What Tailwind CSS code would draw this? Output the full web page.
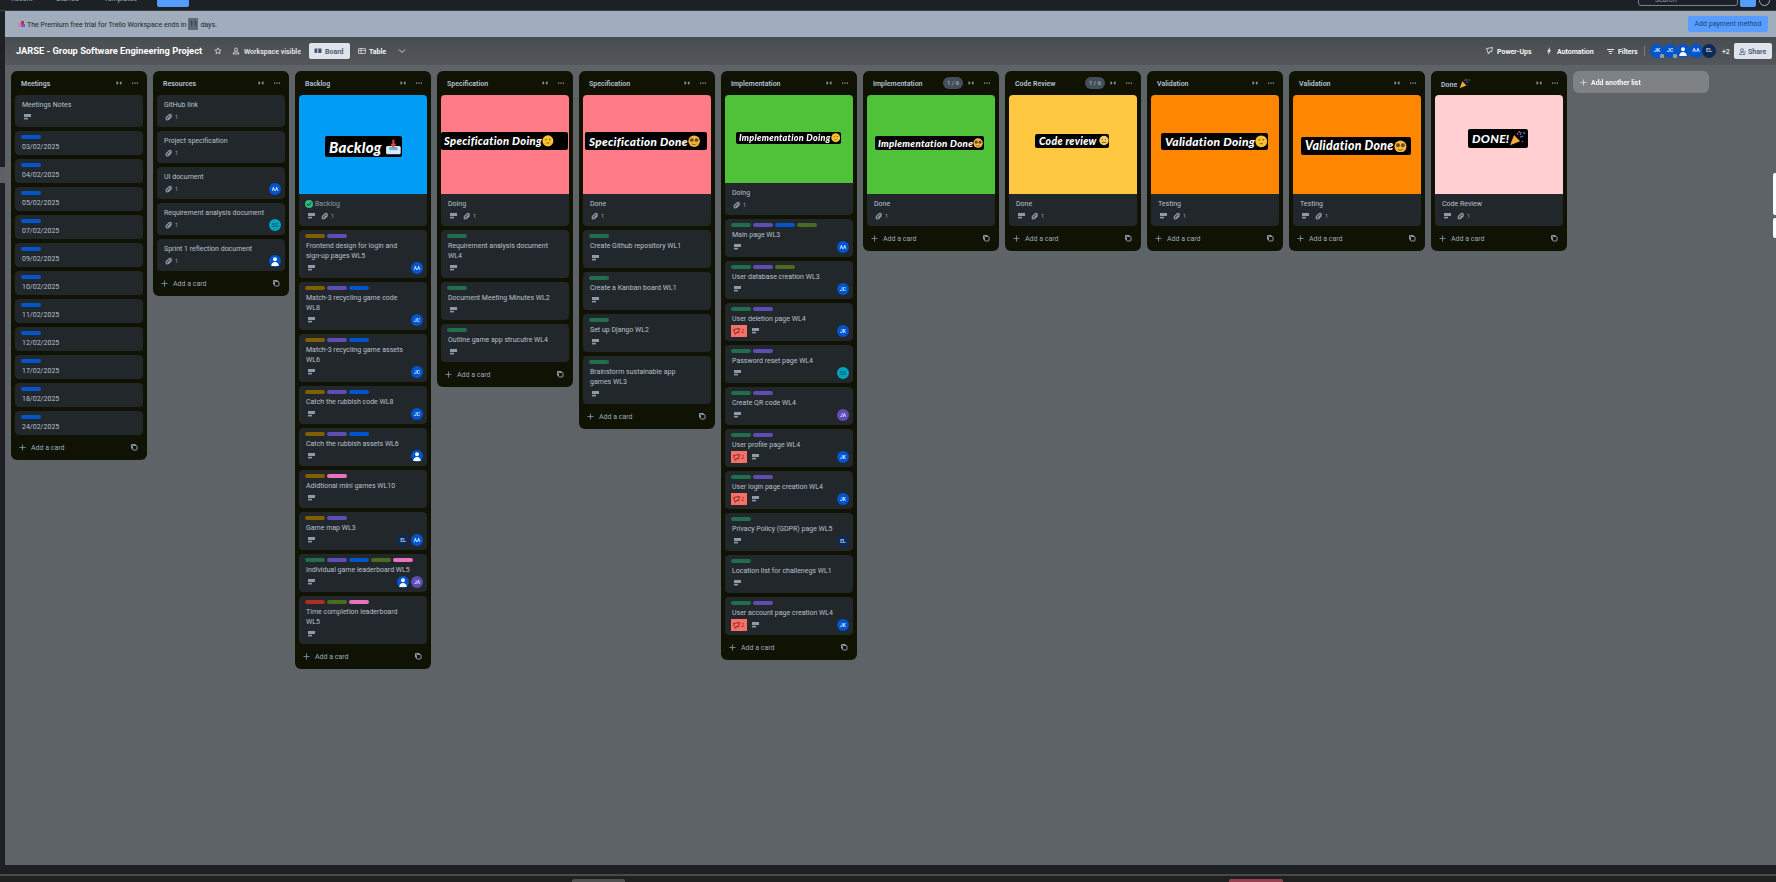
<!DOCTYPE html>
<html lang="en">
<head>
    <meta charset="UTF-8">
    <title>JARSE - Group Software Engineering Project | Trello</title>
    <script src="https://cdn.jsdelivr.net/npm/@tailwindcss/browser@4"></script>
</head>
<body class="bg-[#1d2125] font-['Roboto',sans-serif] text-[7px] leading-[10px] text-[#b6c2cf] overflow-hidden">
<div class="relative w-[1776px] h-[882px] flex flex-col overflow-hidden blur-[0.3px]">

    <!-- top nav, mostly scrolled out of the shot -->
    <nav class="h-[11px] shrink-0 bg-[#1d2125] border-b border-[#3a4045] flex items-start overflow-hidden text-[#9fadbc]">
        <div class="flex items-start -mt-[6px] pl-[11px]">
            <span class="w-[45px]">Recent</span>
            <span class="w-[48px]">Starred</span>
            <span class="w-[53px]">Templates</span>
        </div>
        <div class="w-[32px] h-[15px] -mt-[8px] pt-[1px] bg-[#579dff] rounded-[2px] text-[#1d2125] text-center">Create</div>
        <div class="ml-auto flex items-start">
            <div class="w-[100px] h-[14px] -mt-[8px] pt-[2px] border border-[#738496] rounded-[3px] pl-[16px] text-[#8c9bab]">Search</div>
            <div class="w-[16px] h-[15px] -mt-[8px] ml-[2px] bg-[#579dff] rounded-[2px]"></div>
            <div class="w-[11px] h-[11px] -mt-[5px] ml-[3px] mr-[6px] border border-[#9fadbc] rounded-full"></div>
        </div>
    </nav>

    <div class="flex flex-1 min-h-0">
        <!-- collapsed workspace sidebar -->
        <div class="w-[5px] shrink-0 bg-[#1d2125]">
            <div class="h-[16px] mt-[156px] bg-[#5b6167]"></div>
        </div>

        <div class="flex-1 min-w-0 flex flex-col">
            <div class="h-[26px] shrink-0 bg-[#9fadbc] flex items-center text-[#22272b]">
                <svg class="w-[7px] h-[7px] ml-[13px] mr-[2px]" viewBox="0 0 7 7"><rect x="0" y="2" width="3" height="4" fill="#e774bb"/><rect x="3" y="0" width="3" height="3" fill="#c9372c"/><rect x="3" y="3" width="4" height="3" fill="#6e5dc6"/></svg>
                <span class="pt-[1px]">The Premium free trial for Trello Workspace ends in</span>
                <span class="ml-[2px] w-[10px] h-[12px] bg-[#5b6b78] rounded-[1px] flex items-center justify-center text-[#22272b]">11</span>
                <span class="ml-[2px] pt-[1px]">days.</span>
                <button class="ml-auto mr-[8px] w-[80px] h-[16px] bg-[#579dff] rounded-[2px] text-[7px] text-[#1c3f73]">Add payment method</button>
            </div>

            <header class="h-[28px] shrink-0 bg-linear-to-b from-[#484d51] to-[#53575b] flex items-center text-white">
                <h1 class="ml-[11px] text-[9.3px] font-bold w-[187px] whitespace-nowrap">JARSE - Group Software Engineering Project</h1>
                <svg class="ml-[11px] w-[8px] h-[8px]" viewBox="0 0 16 16" fill="none" stroke="#dfe1e6" stroke-width="1.6"><path d="M8 1.8l1.9 4 4.3.5-3.2 2.9.9 4.3L8 11.3l-3.9 2.2.9-4.3-3.2-2.9 4.3-.5z"/></svg>
                <svg class="ml-[10px] w-[8px] h-[8px]" viewBox="0 0 16 16" fill="none" stroke="#dfe1e6" stroke-width="1.6"><circle cx="8" cy="5" r="3"/><path d="M2 14l2-4h8l2 4z"/></svg>
                <span class="ml-[4px] pt-[1px] w-[58px] font-semibold whitespace-nowrap text-[#e6e8ea]">Workspace visible</span>
                <div class="ml-[7px] w-[41px] h-[16px] bg-[#dee4ea] rounded-[2px] flex items-center text-[#44546f] font-semibold">
                    <svg class="ml-[5px] w-[8px] h-[8px]" viewBox="0 0 16 16" fill="#44546f"><rect x="1" y="3" width="14" height="9" rx="1"/><rect x="6.5" y="3" width="2" height="9" fill="#dee4ea"/></svg>
                    <span class="ml-[3px] pt-[1px]">Board</span>
                </div>
                <svg class="ml-[8px] w-[8px] h-[8px]" viewBox="0 0 16 16" fill="none" stroke="#dfe1e6" stroke-width="1.5"><rect x="1" y="3" width="14" height="10" rx="1"/><path d="M1 7h14M6 3v10"/></svg>
                <span class="ml-[3px] pt-[1px] font-semibold">Table</span>
                <svg class="ml-[12px] w-[8px] h-[8px]" viewBox="0 0 16 16" fill="none" stroke="#dfe1e6" stroke-width="1.8"><path d="M2 5l6 6 6-6"/></svg>

                <div class="ml-auto flex items-center font-semibold">
                    <svg class="w-[7px] h-[8px]" viewBox="0 0 14 16" fill="none" stroke="#e6e8ea" stroke-width="1.7"><path d="M1 3l12-2-2 9-3-2-3 6z"/></svg>
                    <span class="ml-[4px] pt-[1px] w-[36px] whitespace-nowrap">Power-Ups</span>
                    <svg class="ml-[13px] w-[6px] h-[8px]" viewBox="0 0 12 16" fill="#e6e8ea"><path d="M8 0L2 9h3l-1 7 6-10H7z"/></svg>
                    <span class="ml-[5px] pt-[1px] w-[38px]">Automation</span>
                    <svg class="ml-[12px] w-[7px] h-[7px]" viewBox="0 0 14 14" fill="#e6e8ea"><path d="M0 2h14v2H0zM3 6h8v2H3zM5 10h4v2H5z"/></svg>
                    <span class="ml-[4px] pt-[1px] w-[20px]">Filters</span>
                    <div class="ml-[6px] w-px h-[10px] bg-white/25"></div>
                    <div id="head-avatars" class="ml-[6px] flex items-center"></div>
                    <span class="ml-[6px] pt-[1px] w-[10px] text-[#dfe1e6]">+2</span>
                    <div class="ml-[2px] mr-[4px] w-[38px] h-[16px] bg-[#dee4ea] rounded-[2px] flex items-center text-[#44546f]">
                        <svg class="ml-[5px] w-[7px] h-[7px]" viewBox="0 0 16 16" fill="none" stroke="#44546f" stroke-width="1.7"><circle cx="7" cy="5" r="3.4"/><path d="M1 15c0-7 12-7 12 0zM12 9h4"/></svg>
                        <span class="ml-[2px] pt-[1px]">Share</span>
                    </div>
                </div>
            </header>

            <main id="board" class="flex-1 min-h-0 bg-[#5e6367] flex items-start gap-[6px] pt-[6px] pl-[6px]"></main>
        </div>
    </div>

    <div class="h-[9px] shrink-0 bg-[#1d2125]"></div>
    <div class="h-[2px] shrink-0 bg-[#4a4a4a]"></div>
    <div class="h-[6px] shrink-0 bg-[#202020] flex items-start pt-[3px]">
        <div class="ml-[572px] w-[53px] h-[3px] bg-[#505050] rounded-t-[2px]"></div>
        <div class="ml-[604px] w-[54px] h-[3px] bg-[#96404f] rounded-t-[2px]"></div>
    </div>

    <!-- help tabs stuck on the right edge -->
    <div class="absolute right-0 top-[173px] w-[3px] h-[42px] bg-white rounded-l-[2px]"></div>
    <div class="absolute right-0 top-[218px] w-[3px] h-[20px] bg-white rounded-l-[2px]"></div>
</div>

<script>
    const etiquetas = {
        g: "bg-[#216e4e]", p: "bg-[#5e4db2]", b: "bg-[#0055cc]", y: "bg-[#7f5f01]",
        k: "bg-[#e774bb]", o: "bg-[#4c6b1f]", r: "bg-[#ae2e24]"
    };
    const colorAvatar = {
        AA: "bg-[#0055cc] text-[#cce0ff]", JC: "bg-[#0055cc] text-[#cce0ff]", JK: "bg-[#0055cc] text-[#cce0ff]",
        SS: "bg-[#00a3bf] text-[#0c5a6a]", JA: "bg-[#5e4db2] text-[#d3cdf5]", EL: "bg-[#0c2a5a] text-[#b6c2cf]",
        U: "bg-[#0055cc] text-white"
    };

    const iconoPersona = `<svg class="w-[8px] h-[9px]" viewBox="0 0 10 12" fill="#fff"><circle cx="5" cy="3" r="2.6"/><path d="M0 12c0-7 10-7 10 0z"/></svg>`;
    const iconoDesc = `<span class="w-[8px] h-[8px] flex items-center justify-center"><svg class="w-[7px] h-[6px]" viewBox="0 0 7 6"><rect width="7" height="3" fill="#8c9bab"/><rect y="3.8" width="4" height="1.6" fill="#8c9bab"/></svg></span>`;
    const iconoClip = `<svg class="w-[8px] h-[8px]" viewBox="0 0 16 16" fill="none" stroke="#8c9bab" stroke-width="2.6"><path d="M13 7l-6 6c-3 2-6-1-4-4l6-6c2-1 4 1 3 3l-6 6"/></svg>`;
    const iconoVoto = `<svg class="w-[7px] h-[7px]" viewBox="0 0 14 14" fill="none" stroke="#7a231c" stroke-width="1.8"><path d="M1 3l12-2-2 9-3-2-3 5z"/></svg>`;

    const cara = (piel, detalle) => `<svg class="inline-block w-[1.05em] h-[1.05em] align-[-0.15em]" viewBox="0 0 16 16"><circle cx="8" cy="8" r="7.5" fill="${piel}"/>${detalle}</svg>`;
    const emoji = {
        pensando: cara("#fbc02d", `<circle cx="5.5" cy="6" r="1" fill="#6d4c1f"/><circle cx="10.5" cy="6" r="1" fill="#6d4c1f"/><path d="M6 11h4" stroke="#6d4c1f"/>`),
        gafas: cara("#f4b63f", `<circle cx="5" cy="6.5" r="2.4" fill="#6d4c1f"/><circle cx="11" cy="6.5" r="2.4" fill="#6d4c1f"/><path d="M5 11.5c2 1.5 4 1.5 6 0" stroke="#6d4c1f" fill="none"/>`),
        neutra: cara("#f7cf6a", `<circle cx="5.5" cy="6.5" r="1" fill="#6d4c1f"/><circle cx="10.5" cy="6.5" r="1" fill="#6d4c1f"/><path d="M4.5 11h7" stroke="#6d4c1f" stroke-width="1.4"/>`),
        bandeja: `<svg class="inline-block w-[1.2em] h-[1.2em] align-[-0.2em]" viewBox="0 0 16 16"><rect x="1" y="7" width="14" height="8" rx="1.5" fill="#d9ecf7"/><rect x="4" y="8" width="8" height="3" fill="#6fb3dc"/><path d="M8 1v6" stroke="#e0443a" stroke-width="2"/><path d="M5 5l3 4 3-4z" fill="#e0443a"/></svg>`,
        fiesta: `<svg class="inline-block w-[1.35em] h-[1.35em] align-[-0.25em]" viewBox="0 0 16 16"><path d="M1 15L5 5l6 6z" fill="#f2a93b"/><path d="M8 3l1 2M12 2l-1 3M14 6l-3 1M13 11l1 1" stroke="#6e5dc6" stroke-width="1.3"/><circle cx="10" cy="2" r="1" fill="#e0443a"/><circle cx="15" cy="3" r="1" fill="#2a9d4e"/></svg>`
    };

    const avatar = (quien, tam) => {
        const medida = tam === "head" ? "w-[14px] h-[14px] text-[5.5px] -ml-px" : "w-[12px] h-[12px] text-[5px]";
        const marca = tam === "head" && (quien === "JK" || quien === "JC")
            ? `<span class="absolute right-0 bottom-0 w-[4px] h-[4px] bg-[#8c9bab] rounded-[1px]"></span>` : "";
        return `<span class="relative ${medida} ${colorAvatar[quien]} rounded-full flex items-center justify-center font-bold leading-none shrink-0">${quien === "U" ? iconoPersona : quien}${marca}</span>`;
    };

    // una tarjeta: l etiquetas, t titulo, v votos, d descripcion, c adjuntos, a avatares
    const tarjeta = ({ l, t, v, d, c, a, cover, check }) => {
        const labels = l ? `<div class="flex gap-[2px] px-[6px] pt-[4px]">${[...l].map(x => `<span class="w-[20px] h-[4px] rounded-[2px] ${etiquetas[x]}"></span>`).join("")}</div>` : "";
        const portada = cover ? `<div class="relative ${cover.h} rounded-t-[4px] ${cover.bg}"><div class="absolute ${cover.box} bg-black rounded-[2px] flex items-center whitespace-nowrap font-['Lato',sans-serif] font-black italic text-white tracking-[0.3px]">${cover.txt}</div></div>` : "";
        const insignias = v || d || c || a
            ? `<div class="flex items-center h-[12px] mt-[2px] pl-[6px] pr-[4px]">
                ${v ? `<span class="w-[16px] h-[12px] mr-[2px] bg-[#f87168] flex items-center pl-[2px] text-[#7a231c]">${iconoVoto}<span class="ml-[1px] text-[5.5px]">2</span></span>` : ""}
                ${d ? `<span class="ml-[2px]">${iconoDesc}</span>` : ""}
                ${c ? `<span class="${d ? "ml-[6px]" : "ml-[2px]"} flex items-center text-[5.5px] text-[#9fadbc]">${iconoClip}<span class="ml-[2px]">1</span></span>` : ""}
                ${a ? `<span class="ml-auto flex gap-[2px]">${a.split(" ").map(x => avatar(x)).join("")}</span>` : ""}
               </div>`
            : "";
        return `<div class="w-[128px] bg-[#22272b] rounded-[4px] pb-[4px]">
            ${portada}${labels}
            <div class="px-[7px] -mb-[1px] ${l ? "pt-[3px]" : "pt-[5px]"} ${check ? "flex items-center text-[#8c9bab]" : ""}">${check ? `<svg class="w-[8px] h-[8px] mr-[2px] -ml-[1px]" viewBox="0 0 16 16"><circle cx="8" cy="8" r="8" fill="#2abb7f"/><path d="M4 8l3 3 5-6" stroke="#1d2125" stroke-width="2" fill="none"/></svg>` : ""}${t}</div>
            ${insignias}
        </div>`;
    };

    const portadas = {
        backlog: { h: "h-[99px]", bg: "bg-[#009cf5]", box: "left-[26px] top-[41px] w-[77px] h-[21px] pl-[4px] text-[15px]", txt: `Backlog&nbsp;${emoji.bandeja}` },
        specDoing: { h: "h-[99px]", bg: "bg-[#ff7b88]", box: "left-0 top-[37px] w-[127px] h-[18px] pl-[3px] text-[11.2px]", txt: `Specification Doing${emoji.pensando}` },
        specDone: { h: "h-[99px]", bg: "bg-[#ff7b88]", box: "left-[2px] top-[37px] w-[122px] h-[18px] pl-[4px] text-[11.7px]", txt: `Specification Done${emoji.gafas}` },
        implDoing: { h: "h-[88px]", bg: "bg-[#50c239]", box: "left-[11px] top-[37px] w-[105px] h-[12px] pl-[3px] text-[9px]", txt: `Implementation Doing${emoji.pensando}` },
        implDone: { h: "h-[99px]", bg: "bg-[#50c239]", box: "left-[8px] top-[41px] w-[109px] h-[14px] pl-[3px] text-[9.7px]", txt: `Implementation Done${emoji.gafas}` },
        code: { h: "h-[99px]", bg: "bg-[#ffc840]", box: "left-[26px] top-[39px] w-[74px] h-[14px] pl-[4px] text-[10.5px]", txt: `Code review&nbsp;${emoji.neutra}` },
        valDoing: { h: "h-[99px]", bg: "bg-[#ff8600]", box: "left-[10px] top-[38px] w-[107px] h-[17px] pl-[4px] text-[12px]", txt: `Validation Doing${emoji.pensando}` },
        valDone: { h: "h-[99px]", bg: "bg-[#ff8600]", box: "left-[8px] top-[42px] w-[110px] h-[18px] pl-[4px] text-[12.3px]", txt: `Validation Done${emoji.gafas}` },
        done: { h: "h-[99px]", bg: "bg-[#ffcfd2]", box: "left-[33px] top-[34px] w-[60px] h-[19px] pl-[4px] text-[12px]", txt: `DONE!${emoji.fiesta}` }
    };

    const fechas = ["03/02/2025", "04/02/2025", "05/02/2025", "07/02/2025", "09/02/2025", "10/02/2025", "11/02/2025", "12/02/2025", "17/02/2025", "18/02/2025", "24/02/2025"];

    const listas = [
        { n: "Meetings", cards: [{ t: "Meetings Notes", d: 1 }, ...fechas.map(f => ({ l: "b", t: f }))] },
        { n: "Resources", cards: [
            { t: "GitHub link", c: 1 },
            { t: "Project specification", c: 1 },
            { t: "UI document", c: 1, a: "AA" },
            { t: "Requirement analysis document", c: 1, a: "SS" },
            { t: "Sprint 1 reflection document", c: 1, a: "U" }
        ] },
        { n: "Backlog", cards: [
            { cover: portadas.backlog, t: "Backlog", d: 1, c: 1, check: 1 },
            { l: "yp", t: "Frontend design for login and<br>sign-up pages WL5", d: 1, a: "AA" },
            { l: "ypb", t: "Match-3 recycling game code<br>WL8", d: 1, a: "JC" },
            { l: "ypb", t: "Match-3 recycling game assets<br>WL6", d: 1, a: "JC" },
            { l: "ypb", t: "Catch the rubbish code WL8", d: 1, a: "JC" },
            { l: "ypb", t: "Catch the rubbish assets WL6", d: 1, a: "U" },
            { l: "yk", t: "Adidtional mini games WL10", d: 1 },
            { l: "yp", t: "Game map WL3", d: 1, a: "EL AA" },
            { l: "gpbok", t: "Individual game leaderboard WL5", d: 1, a: "U JA" },
            { l: "rok", t: "Time completion leaderboard<br>WL5", d: 1 }
        ] },
        { n: "Specification", cards: [
            { cover: portadas.specDoing, t: "Doing", d: 1, c: 1 },
            { l: "g", t: "Requirement analysis document<br>WL4", d: 1 },
            { l: "g", t: "Document Meeting Minutes WL2", d: 1 },
            { l: "g", t: "Outline game app strucutre WL4", d: 1 }
        ] },
        { n: "Specification", cards: [
            { cover: portadas.specDone, t: "Done", c: 1 },
            { l: "g", t: "Create Github repository WL1", d: 1 },
            { l: "g", t: "Create a Kanban board WL1", d: 1 },
            { l: "g", t: "Set up Django WL2", d: 1 },
            { l: "g", t: "Brainstorm sustainable app<br>games WL3", d: 1 }
        ] },
        { n: "Implementation", cards: [
            { cover: portadas.implDoing, t: "Doing", c: 1 },
            { l: "gpbo", t: "Main page WL3", d: 1, a: "AA" },
            { l: "gpo", t: "User database creation WL3", d: 1, a: "JC" },
            { l: "gp", t: "User deletion page WL4", v: 1, d: 1, a: "JK" },
            { l: "gp", t: "Password reset page WL4", d: 1, a: "SS" },
            { l: "gp", t: "Create QR code WL4", d: 1, a: "JA" },
            { l: "gp", t: "User profile page WL4", v: 1, d: 1, a: "JK" },
            { l: "gp", t: "User login page creation WL4", v: 1, d: 1, a: "JK" },
            { l: "g", t: "Privacy Policy (GDPR) page WL5", d: 1, a: "EL" },
            { l: "g", t: "Location list for challenegs WL1", d: 1 },
            { l: "gp", t: "User account page creation WL4", v: 1, d: 1, a: "JK" }
        ] },
        { n: "Implementation", pill: "1 / 6", cards: [{ cover: portadas.implDone, t: "Done", c: 1 }] },
        { n: "Code Review", pill: "1 / 6", cards: [{ cover: portadas.code, t: "Done", d: 1, c: 1 }] },
        { n: "Validation", cards: [{ cover: portadas.valDoing, t: "Testing", d: 1, c: 1 }] },
        { n: "Validation", cards: [{ cover: portadas.valDone, t: "Testing", d: 1, c: 1 }] },
        { n: `Done&nbsp;<span class="text-[8px]">${emoji.fiesta}</span>`, cards: [{ cover: portadas.done, t: "Code Review", d: 1, c: 1 }] }
    ];

    const columna = ({ n, pill, cards }) => `
        <section class="w-[136px] shrink-0 bg-[#101204] rounded-[6px]">
            <div class="h-[24px] flex items-center pl-[10px] pr-[6px]">
                <h2 class="flex-1 pt-[1px] font-semibold text-[#b6c2cf]">${n}</h2>
                ${pill ? `<span class="w-[20px] h-[12px] mr-[2px] bg-[#454f59] rounded-full flex items-center justify-center text-[6px] text-[#b6c2cf]">${pill}</span>` : ""}
                <svg class="w-[12px] h-[8px]" viewBox="0 0 12 8" fill="#9fadbc"><path d="M3.6 2l1.9 2-1.9 2zM8.4 2L6.5 4l1.9 2z"/></svg>
                <svg class="ml-[4px] w-[12px] h-[8px]" viewBox="0 0 12 8" fill="#9fadbc"><rect x="3" y="3.5" width="1.2" height="1.2"/><rect x="5.4" y="3.5" width="1.2" height="1.2"/><rect x="7.8" y="3.5" width="1.2" height="1.2"/></svg>
            </div>
            <div class="flex flex-col gap-[4px] px-[4px]">${cards.map(tarjeta).join("")}</div>
            <div class="h-[25px] flex items-center pl-[8px] pr-[9px] text-[#9fadbc]">
                <svg class="w-[7px] h-[7px]" viewBox="0 0 14 14" stroke="#738496" stroke-width="2"><path d="M7 1v12M1 7h12"/></svg>
                <span class="ml-[5px] pt-[1px]">Add a card</span>
                <svg class="ml-auto w-[7px] h-[7px]" viewBox="0 0 14 14" fill="none" stroke="#8c9bab" stroke-width="2"><rect x="3" y="3" width="9" height="9" rx="1.5"/><path d="M1 9V1h8"/></svg>
            </div>
        </section>`;

    document.getElementById("board").innerHTML = listas.map(columna).join("") + `
        <div class="w-[136px] h-[22px] shrink-0 bg-white/20 rounded-[6px] flex items-center pl-[7px] text-white font-semibold">
            <svg class="w-[7px] h-[7px]" viewBox="0 0 14 14" stroke="#c9ced3" stroke-width="2"><path d="M7 1v12M1 7h12"/></svg>
            <span class="ml-[4px] pt-[1px]">Add another list</span>
        </div>`;

    document.getElementById("head-avatars").innerHTML = ["JK", "JC", "U", "AA", "EL"].map(a => avatar(a, "head")).join("");
</script>
</body>
</html>
